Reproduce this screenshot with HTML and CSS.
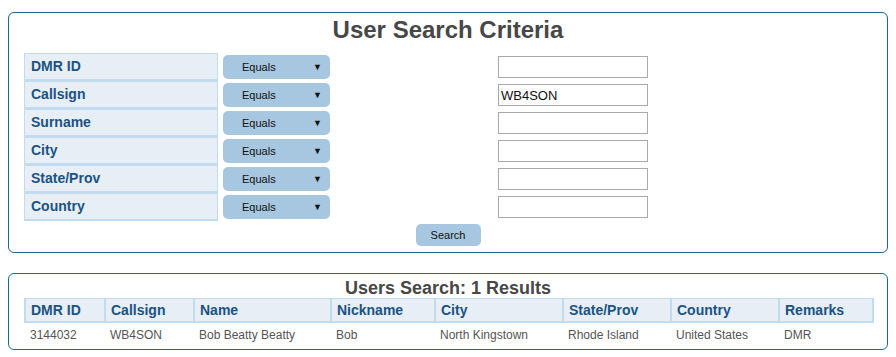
FILE: index.html
```html
<!DOCTYPE html>
<html lang="en">
<head>
    <meta charset="UTF-8">
    <title>User Search</title>
    <link rel="stylesheet" href="styles.css">
</head>
<body>
    <div class="panel criteria">
        <h2>User Search Criteria</h2>
        <div class="criteria-grid">
            <div class="label">DMR ID</div>
            <div class="op">Equals<span class="arrow">&#9660;</span></div>
            <input type="text" class="value">

            <div class="label">Callsign</div>
            <div class="op">Equals<span class="arrow">&#9660;</span></div>
            <input type="text" class="value" value="WB4SON">

            <div class="label">Surname</div>
            <div class="op">Equals<span class="arrow">&#9660;</span></div>
            <input type="text" class="value">

            <div class="label">City</div>
            <div class="op">Equals<span class="arrow">&#9660;</span></div>
            <input type="text" class="value">

            <div class="label">State/Prov</div>
            <div class="op">Equals<span class="arrow">&#9660;</span></div>
            <input type="text" class="value">

            <div class="label">Country</div>
            <div class="op">Equals<span class="arrow">&#9660;</span></div>
            <input type="text" class="value">
        </div>
        <div class="actions">
            <button class="search">Search</button>
        </div>
    </div>

    <div class="panel results">
        <h3>Users Search: 1 Results</h3>
        <table>
            <colgroup>
                <col class="c1">
                <col class="c2">
                <col class="c3">
                <col class="c4">
                <col class="c5">
                <col class="c6">
                <col class="c7">
                <col class="c8">
            </colgroup>
            <thead>
                <tr>
                    <th>DMR ID</th>
                    <th>Callsign</th>
                    <th>Name</th>
                    <th>Nickname</th>
                    <th>City</th>
                    <th>State/Prov</th>
                    <th>Country</th>
                    <th>Remarks</th>
                </tr>
            </thead>
            <tbody>
                <tr>
                    <td>3144032</td>
                    <td>WB4SON</td>
                    <td>Bob Beatty Beatty</td>
                    <td>Bob</td>
                    <td>North Kingstown</td>
                    <td>Rhode Island</td>
                    <td>United States</td>
                    <td>DMR</td>
                </tr>
            </tbody>
        </table>
    </div>
</body>
</html>
```

FILE: styles.css
```css
body {
    font-family: "Liberation Sans", Arial, sans-serif;
    margin: 0;
    padding: 12px 8px 0 8px;
    background: #fff;
}

.panel {
    border: 1px solid #1b6b8c;
    border-radius: 6px;
    width: 878px;
}

.criteria {
    height: 239px;
}

.results {
    margin-top: 20px;
    height: 75px;
}

h2 {
    margin: 0;
    padding-top: 3px;
    text-align: center;
    font-size: 24px;
    color: #474747;
    line-height: 28px;
}

.criteria-grid {
    display: grid;
    grid-template-columns: 194px 107px 150px;
    grid-auto-rows: 28px;
    column-gap: 5px;
    margin: 9px 0 0 15px;
}

.label {
    background: #e8eef6;
    border: 1px solid #c2dbee;
    border-bottom-width: 2px;
    font-weight: bold;
    font-size: 14px;
    color: #1a5382;
    padding: 0 6px;
    line-height: 25px;
}

.op {
    align-self: center;
    height: 24px;
    background: #a7c6df;
    border-radius: 5px;
    font-size: 11px;
    color: #111;
    line-height: 24px;
    padding-left: 19px;
    position: relative;
}

.arrow {
    position: absolute;
    right: 8px;
    top: 0;
    font-size: 9px;
}

.value {
    align-self: center;
    margin-left: 163px;
    width: 150px;
    height: 22px;
    box-sizing: border-box;
    border: 1px solid #aaa;
    font-family: inherit;
    font-size: 13px;
    padding: 1px 2px;
    color: #111;
}

.actions {
    text-align: center;
    margin-top: 3px;
}

.search {
    width: 65px;
    height: 22px;
    border: none;
    border-radius: 5px;
    background: #a7c6df;
    font-family: inherit;
    font-size: 11px;
    color: #111;
    padding: 0;
}

h3 {
    margin: 0;
    padding-top: 4px;
    text-align: center;
    font-size: 18px;
    color: #474747;
    line-height: 20px;
}

table {
    border-collapse: collapse;
    table-layout: fixed;
    margin-left: 15px;
    width: 848px;
}

th {
    background: #e8eef6;
    border: 2px solid #c2dbee;
    border-top-width: 1px;
    text-align: left;
    font-size: 14px;
    color: #1a5382;
    padding: 0 5px;
    height: 22px;
}

td {
    font-size: 12px;
    color: #555;
    padding: 2px 5px 0 5px;
    height: 20px;
}

.c1 { width: 80px; }
.c2 { width: 89px; }
.c3 { width: 137px; }
.c4 { width: 104px; }
.c5 { width: 128px; }
.c6 { width: 108px; }
.c7 { width: 108px; }
.c8 { width: 94px; }
```
